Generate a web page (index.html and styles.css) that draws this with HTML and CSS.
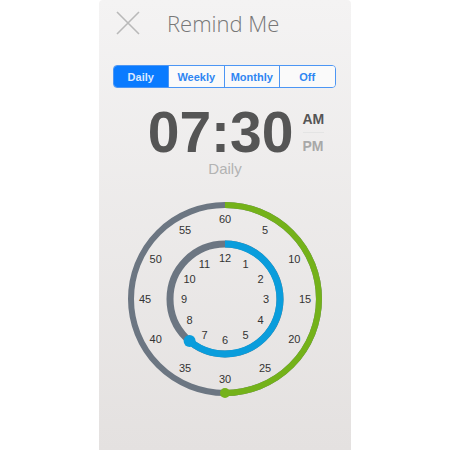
FILE: index.html
```html
<!DOCTYPE html>
<html lang="en">
<head>
    <link rel="stylesheet" href="styles.css">
</head>
<body>
    <div class="panel">
        <header class="top-bar">
            <svg class="close-icon" width="24" height="24" viewBox="0 0 24 24">
                <path d="M1 1 L23 23 M23 1 L1 23" stroke="#b9b9b9" stroke-width="1.6" fill="none"/>
            </svg>
            <h1 class="title">Remind Me</h1>
        </header>

        <div class="segments">
            <button class="seg active">Daily</button>
            <button class="seg">Weekly</button>
            <button class="seg">Monthly</button>
            <button class="seg">Off</button>
        </div>

        <div class="time-row">
            <span class="time">07:30</span>
            <div class="ampm">
                <span class="am">AM</span>
                <span class="pm">PM</span>
            </div>
        </div>
        <div class="repeat">Daily</div>

        <svg class="clock" width="200" height="200" viewBox="-100 -100 200 200">
            <!-- minutes ring -->
            <circle r="94" fill="none" stroke="#6c7682" stroke-width="6"/>
            <path d="M0 -94 A94 94 0 0 1 0 94" fill="none" stroke="#74b21a" stroke-width="6"/>
            <circle cx="0" cy="94" r="5" fill="#74b21a"/>
            <!-- hours ring -->
            <circle r="55" fill="none" stroke="#6c7682" stroke-width="7"/>
            <path d="M0 -55 A55 55 0 1 1 -35.4 42.1" fill="none" stroke="#0a9ddc" stroke-width="7"/>
            <circle cx="-35.4" cy="42.1" r="6" fill="#0a9ddc"/>
            <g class="nums" id="outerNums"></g>
            <g class="nums" id="innerNums"></g>
        </svg>
    </div>
<script>
    const ns = 'http://www.w3.org/2000/svg';
    function addNums(groupId, radius, labels) {
        const g = document.getElementById(groupId);
        labels.forEach((label, i) => {
            const a = i / labels.length * Math.PI * 2;
            const t = document.createElementNS(ns, 'text');
            t.setAttribute('x', (Math.sin(a) * radius).toFixed(1));
            t.setAttribute('y', (-Math.cos(a) * radius + 4).toFixed(1));
            t.textContent = label;
            g.appendChild(t);
        });
    }
    addNums('outerNums', 80, ['60','5','10','15','20','25','30','35','40','45','50','55']);
    addNums('innerNums', 41, ['12','1','2','3','4','5','6','7','8','9','10','11']);
</script>
</body>
</html>
```

FILE: styles.css
```css
body {
    margin: 0;
    background-color: #fff;
    font-family: 'Liberation Sans', Arial, sans-serif;
}

.panel {
    width: 252px;
    height: 450px;
    margin: 0 auto;
    background: linear-gradient(to bottom, #f4f3f3, #e4e1e0);
    border-radius: 4px 4px 0 0;
    display: flex;
    flex-direction: column;
    align-items: center;
}

.top-bar {
    align-self: stretch;
    display: flex;
    align-items: center;
    padding: 11px 0 0 17px;
    height: 24px;
}

.close-icon {
    display: block;
}

.title {
    margin: 0 0 0 27px;
    font-family: 'Open Sans', sans-serif;
    font-weight: 300;
    font-size: 22px;
    color: #777;
}

.segments {
    display: flex;
    width: 221px;
    margin-top: 30px;
    margin-left: -2px;
    border: 1px solid #4c96f4;
    border-radius: 4px;
    overflow: hidden;
}

.seg {
    flex: 1;
    height: 21px;
    padding: 0;
    border: none;
    border-left: 1px solid #4c96f4;
    background: #fafafa;
    color: #2f86f2;
    font-family: 'Liberation Sans', Arial, sans-serif;
    font-size: 11px;
    font-weight: bold;
}

.seg:first-child {
    border-left: none;
}

.seg.active {
    background: #0a7bff;
    color: #dbe9ff;
}

.time-row {
    display: flex;
    align-items: center;
    margin-top: 22px;
    margin-left: 22px;
}

.time {
    font-size: 57px;
    font-weight: bold;
    color: #555;
    line-height: 44px;
}

.ampm {
    display: flex;
    flex-direction: column;
    margin-left: 9px;
    font-size: 14px;
    font-weight: bold;
}

.am {
    color: #555;
    padding-bottom: 5px;
    border-bottom: 1px solid #e4e4e4;
}

.pm {
    color: #a8a8a8;
    padding-top: 5px;
}

.repeat {
    margin-top: 6px;
    font-size: 15px;
    color: #b3b3b3;
}

.clock {
    margin-top: 22px;
    display: block;
}

.nums text {
    font-size: 11px;
    fill: #333;
    text-anchor: middle;
}
```
